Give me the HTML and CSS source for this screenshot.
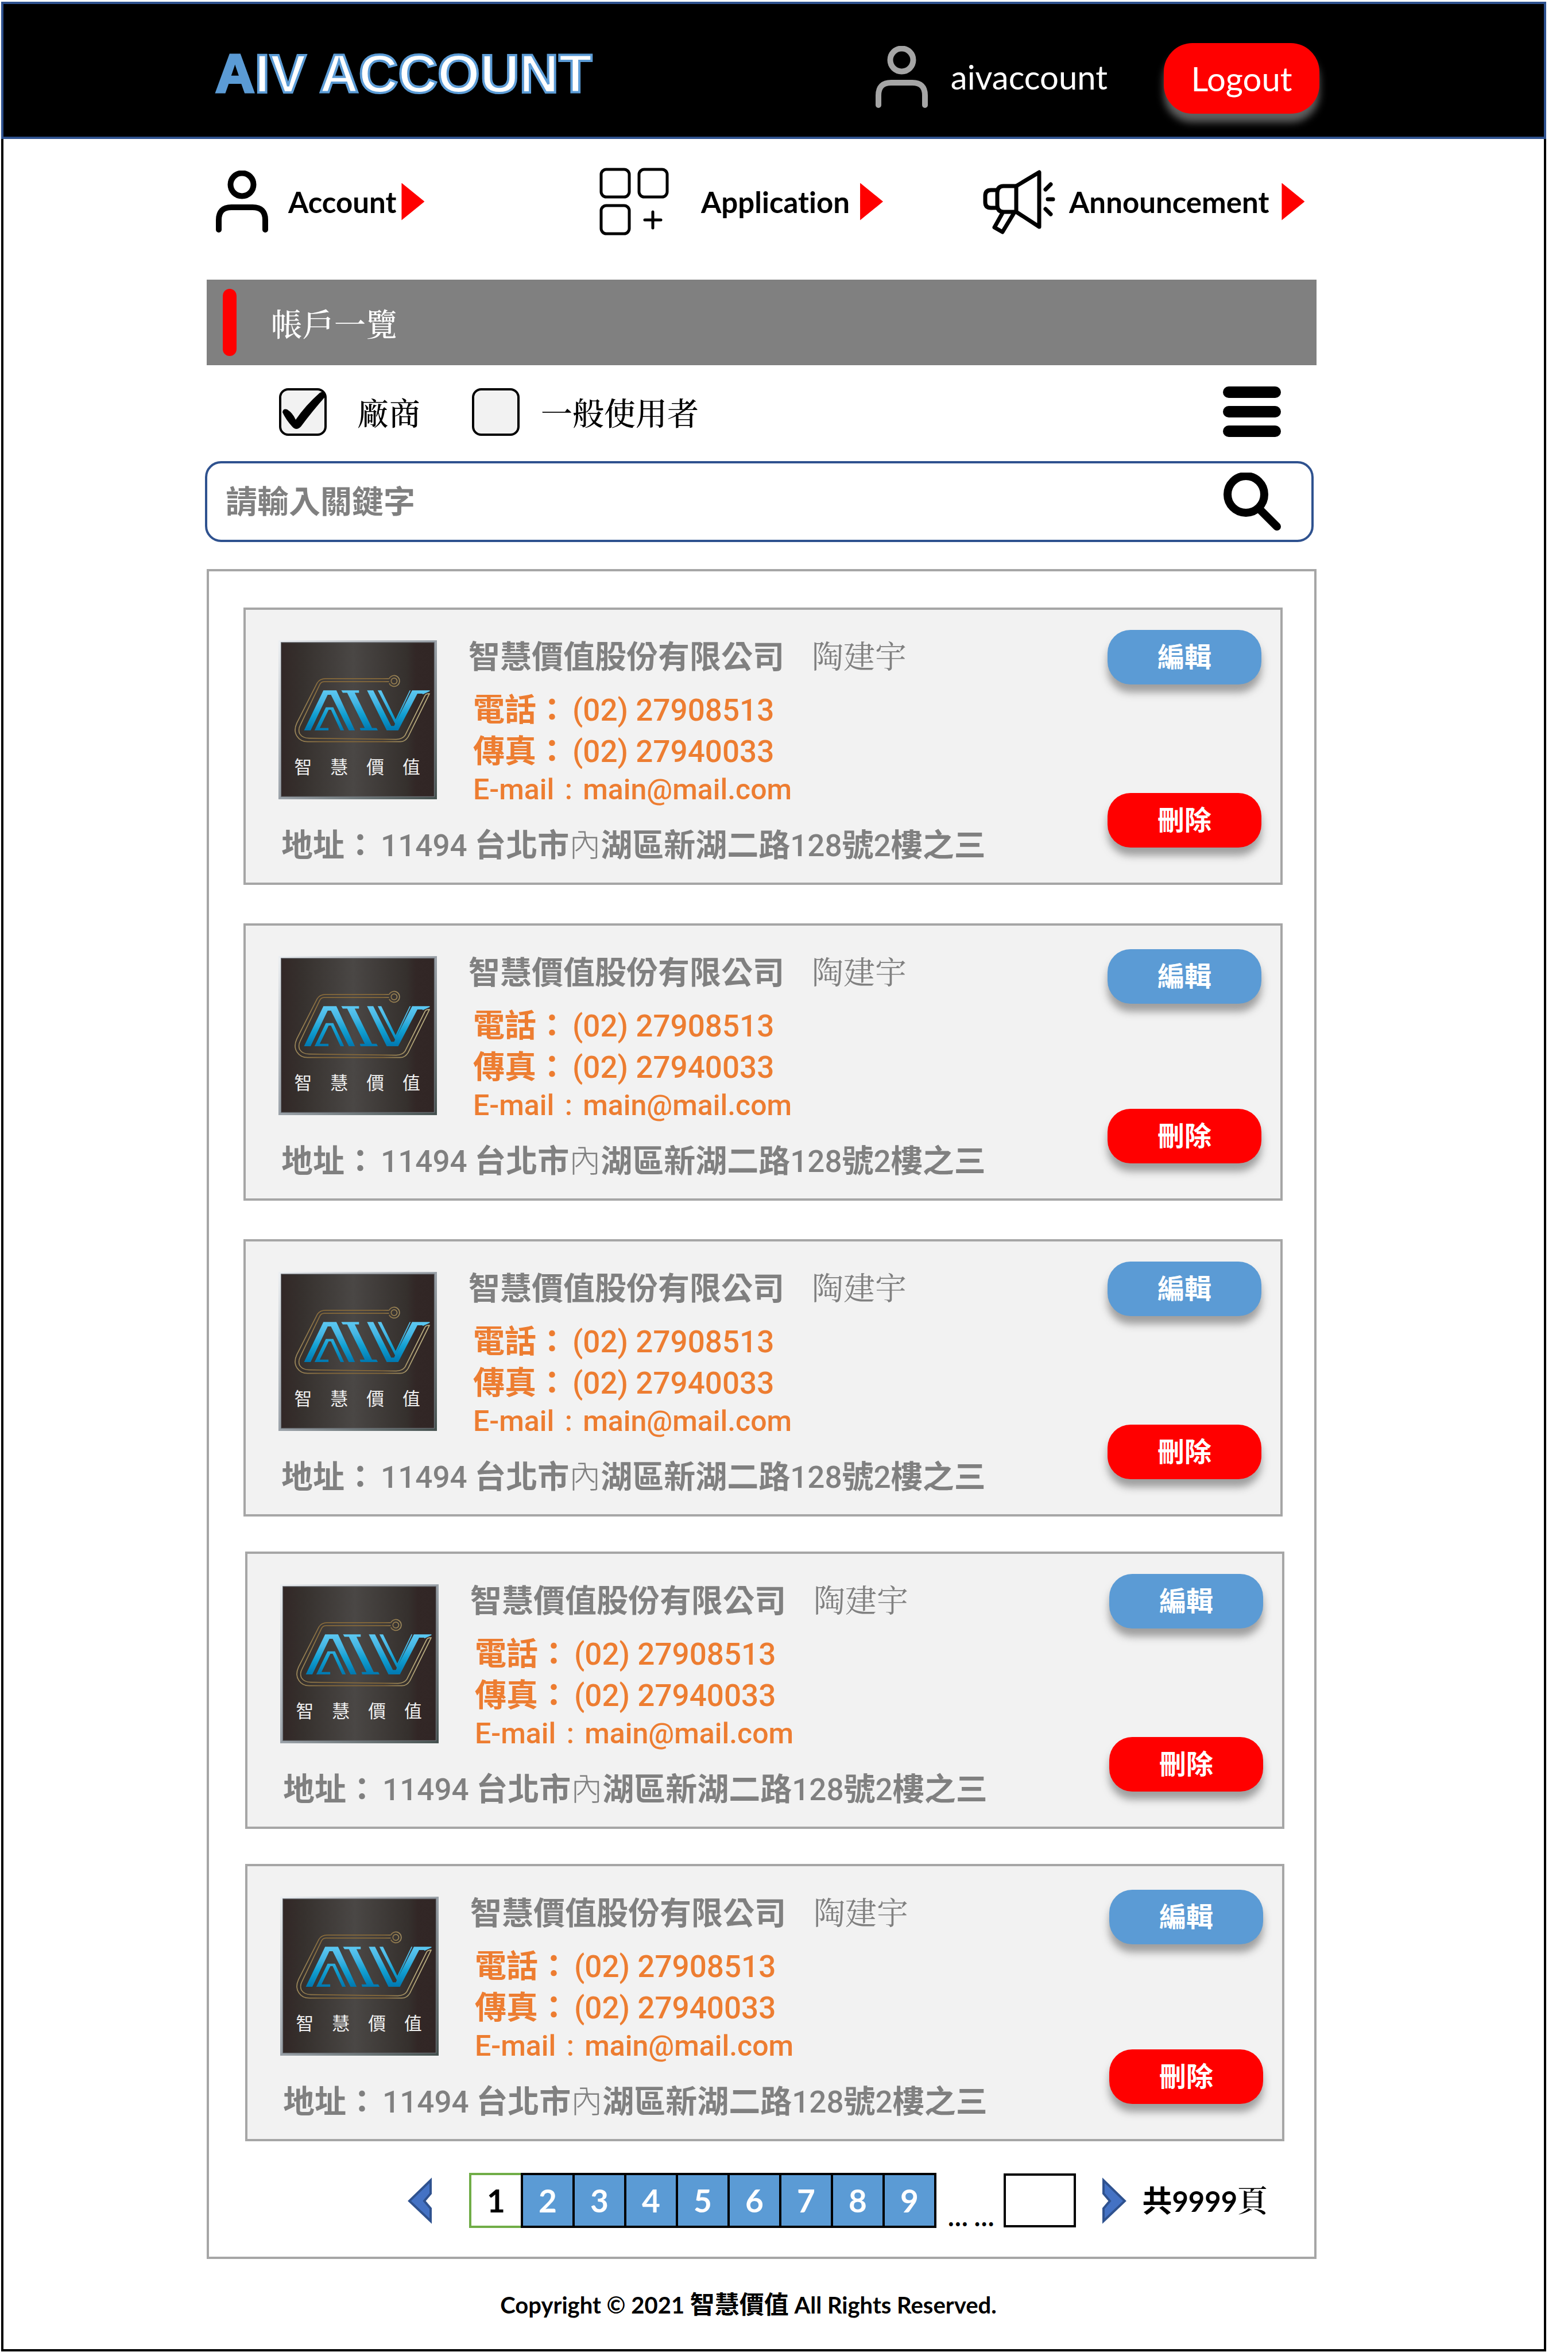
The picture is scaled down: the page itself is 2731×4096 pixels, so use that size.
FILE: index.html
```
<!DOCTYPE html>
<html lang="zh-Hant">
<head>
<meta charset="utf-8">
<meta name="viewport" content="width=device-width, initial-scale=1">
<title>AIV Account</title>
<link rel="stylesheet" href="styles.css">
</head>
<body>
<svg class="defs" aria-hidden="true">
  <defs>
    <linearGradient id="logo-frame" x1="0" y1="0" x2="1" y2="1">
      <stop offset="0" stop-color="#eceff2"/><stop offset=".5" stop-color="#9aa1a8"/><stop offset="1" stop-color="#434f4d"/>
    </linearGradient>
    <linearGradient id="logo-panel" x1="0" y1="0" x2="1" y2="0">
      <stop offset="0" stop-color="#322726"/><stop offset=".14" stop-color="#36312e"/><stop offset=".47" stop-color="#4a4745"/><stop offset=".82" stop-color="#35302d"/><stop offset=".88" stop-color="#322726"/><stop offset="1" stop-color="#312625"/>
    </linearGradient>
    <linearGradient id="logo-blue" gradientUnits="userSpaceOnUse" x1="0" y1="305" x2="0" y2="549">
      <stop offset="0" stop-color="#5cc8f2"/><stop offset=".3" stop-color="#46b6e4"/><stop offset=".6" stop-color="#12a0d2"/><stop offset="1" stop-color="#0078b0"/>
    </linearGradient>
    <linearGradient id="logo-gold" gradientUnits="userSpaceOnUse" x1="100" y1="0" x2="920" y2="0">
      <stop offset="0" stop-color="#a8976a"/><stop offset=".3" stop-color="#86693a"/><stop offset=".75" stop-color="#86693a"/><stop offset="1" stop-color="#b9ad80"/>
    </linearGradient>
  </defs>
  <symbol id="logo" viewBox="0 0 966 969">
    <rect width="966" height="969" fill="url(#logo-frame)"/>
    <rect x="16" y="13" width="934" height="940" fill="url(#logo-panel)" stroke="#6c7076" stroke-width="4"/>
    <g transform="translate(-78 -66)" fill="none" stroke="url(#logo-gold)" stroke-width="6">
      <path d="M752 300H365Q330 300 314 326L190 570Q168 618 192 652Q213 684 255 684H820Q850 684 868 655L998 392Q976 391 970 405L850 645Q835 668 795 670L265 663Q225 663 207 635Q197 610 210 585L330 335Q338 318 358 318H752"/>
      <path d="M753 300A33 33 0 1 1 753 328"/>
      <circle cx="783" cy="314" r="18"/>
    </g>
    <g fill="url(#logo-blue)">
      <path d="M156 549L274 305H353L466 549H429L320 332H300L196 549Z"/>
      <path d="M220 549L289 408H334L400 549H378L320 423H306L252 534H305V549Z"/>
      <path d="M383 305H491V320H465L570 534H598L606 549H500L496 534H526L419 320H392Z"/>
      <path d="M540 305H578L687 522H705L711 509L605 305H627L714 482L800 305H806L718 494L815 305H922V310L880 330L877 325H847L730 549H660Z"/>
    </g>
    <text class="logo-name" x="96 316 536 756" y="813">智慧價值</text>
  </symbol>
  <symbol id="user" viewBox="0 0 91 108">
    <circle cx="45.500" cy="24.500" r="20"/>
    <path d="M5 103V86Q5 64 27 64H64Q86 64 86 86V103"/>
  </symbol>
</svg>

<div class="page">
  <header class="topbar">
    <h1 class="brand"><span class="brand-initial">A</span>IV ACCOUNT</h1>
    <div class="session">
      <svg class="icon-user" aria-hidden="true"><use href="#user"/></svg>
      <span>aivaccount</span>
    </div>
    <button class="logout" type="button">Logout</button>
  </header>

  <nav class="menu">
    <a class="menu-link menu-link--account" href="#account">
      <svg class="icon-user" aria-hidden="true"><use href="#user"/></svg>
      <span>Account</span><i class="arrow"></i>
    </a>
    <a class="menu-link menu-link--application" href="#application">
      <svg class="icon-apps" viewBox="0 0 121 118" aria-hidden="true">
        <rect x="3" y="3" width="49" height="48" rx="9"/><rect x="69" y="3" width="49" height="48" rx="9"/><rect x="3" y="66" width="49" height="49" rx="9"/>
        <path d="M79 91H107M93 77V105"/>
      </svg>
      <span>Application</span><i class="arrow"></i>
    </a>
    <a class="menu-link menu-link--announcement" href="#announcement">
      <svg class="icon-horn" viewBox="0 0 127 115" aria-hidden="true">
        <path d="M58 30L98 6V101L58 75Z"/>
        <path d="M58 30H36Q25 30 25 42V63Q25 75 36 75H58"/>
        <path d="M25 37H14Q4 37 4 47V58Q4 68 14 68H25"/>
        <path d="M34 77L20 102L34 110L54 77"/>
        <path d="M109 36L118 27M113 53H122M109 70L118 79"/>
      </svg>
      <span>Announcement</span><i class="arrow"></i>
    </a>
  </nav>

  <main class="content">
    <h2 class="section-title">帳戶一覽</h2>

    <div class="filters">
      <div class="filter">
        <span class="tickbox"><input id="filter-vendor" type="checkbox" checked><svg viewBox="0 0 83 83" aria-hidden="true"><path d="M6 42Q7 35 14 37Q24 43 29 55Q46 30 71 8Q80 3 82 13Q58 40 38 67Q30 75 23 67Q12 55 6 42Z"/></svg></span>
        <label for="filter-vendor">廠商</label>
      </div>
      <div class="filter filter--user">
        <span class="tickbox"><input id="filter-user" type="checkbox"><svg viewBox="0 0 83 83" aria-hidden="true"><path d="M6 42Q7 35 14 37Q24 43 29 55Q46 30 71 8Q80 3 82 13Q58 40 38 67Q30 75 23 67Q12 55 6 42Z"/></svg></span>
        <label for="filter-user">一般使用者</label>
      </div>
      <button class="list-toggle" type="button" aria-label="選單"><i></i><i></i><i></i></button>
    </div>

    <form class="search">
      <input class="search-input" type="text" placeholder="請輸入關鍵字" aria-label="請輸入關鍵字">
      <button class="search-button" type="button" aria-label="搜尋">
        <svg viewBox="0 0 101 102" aria-hidden="true"><circle cx="39" cy="38" r="32"/><path d="M62 63L93 94"/></svg>
      </button>
    </form>

    <section class="list">
      <div class="card-group">
        <article class="card">
          <svg class="logo" role="img"><use href="#logo"/></svg>
          <div class="info">
            <p class="company">智慧價值股份有限公司<span class="person">陶建宇</span></p>
            <p class="contact">電話：<span class="latin">(02) 27908513</span></p>
            <p class="contact">傳真：<span class="latin">(02) 27940033</span></p>
            <p class="contact contact--mail">E-mail <span class="colon">:</span> main@mail.com</p>
          </div>
          <p class="address">地址：<span class="latin">11494</span> 台北市<span class="thin">內</span>湖區新湖二路<span class="digits">128</span>號<span class="digits">2</span>樓之三</p>
          <div class="actions">
            <button class="button button--edit" type="button">編輯</button>
            <button class="button button--delete" type="button">刪除</button>
          </div>
        </article>
        <article class="card card--low">
          <svg class="logo" role="img"><use href="#logo"/></svg>
          <div class="info">
            <p class="company">智慧價值股份有限公司<span class="person">陶建宇</span></p>
            <p class="contact">電話：<span class="latin">(02) 27908513</span></p>
            <p class="contact">傳真：<span class="latin">(02) 27940033</span></p>
            <p class="contact contact--mail">E-mail <span class="colon">:</span> main@mail.com</p>
          </div>
          <p class="address">地址：<span class="latin">11494</span> 台北市<span class="thin">內</span>湖區新湖二路<span class="digits">128</span>號<span class="digits">2</span>樓之三</p>
          <div class="actions">
            <button class="button button--edit" type="button">編輯</button>
            <button class="button button--delete" type="button">刪除</button>
          </div>
        </article>
        <article class="card">
          <svg class="logo" role="img"><use href="#logo"/></svg>
          <div class="info">
            <p class="company">智慧價值股份有限公司<span class="person">陶建宇</span></p>
            <p class="contact">電話：<span class="latin">(02) 27908513</span></p>
            <p class="contact">傳真：<span class="latin">(02) 27940033</span></p>
            <p class="contact contact--mail">E-mail <span class="colon">:</span> main@mail.com</p>
          </div>
          <p class="address">地址：<span class="latin">11494</span> 台北市<span class="thin">內</span>湖區新湖二路<span class="digits">128</span>號<span class="digits">2</span>樓之三</p>
          <div class="actions">
            <button class="button button--edit" type="button">編輯</button>
            <button class="button button--delete" type="button">刪除</button>
          </div>
        </article>
      </div>
      <div class="card-group card-group--second">
        <article class="card">
          <svg class="logo" role="img"><use href="#logo"/></svg>
          <div class="info">
            <p class="company">智慧價值股份有限公司<span class="person">陶建宇</span></p>
            <p class="contact">電話：<span class="latin">(02) 27908513</span></p>
            <p class="contact">傳真：<span class="latin">(02) 27940033</span></p>
            <p class="contact contact--mail">E-mail <span class="colon">:</span> main@mail.com</p>
          </div>
          <p class="address">地址：<span class="latin">11494</span> 台北市<span class="thin">內</span>湖區新湖二路<span class="digits">128</span>號<span class="digits">2</span>樓之三</p>
          <div class="actions">
            <button class="button button--edit" type="button">編輯</button>
            <button class="button button--delete" type="button">刪除</button>
          </div>
        </article>
        <article class="card card--low">
          <svg class="logo" role="img"><use href="#logo"/></svg>
          <div class="info">
            <p class="company">智慧價值股份有限公司<span class="person">陶建宇</span></p>
            <p class="contact">電話：<span class="latin">(02) 27908513</span></p>
            <p class="contact">傳真：<span class="latin">(02) 27940033</span></p>
            <p class="contact contact--mail">E-mail <span class="colon">:</span> main@mail.com</p>
          </div>
          <p class="address">地址：<span class="latin">11494</span> 台北市<span class="thin">內</span>湖區新湖二路<span class="digits">128</span>號<span class="digits">2</span>樓之三</p>
          <div class="actions">
            <button class="button button--edit" type="button">編輯</button>
            <button class="button button--delete" type="button">刪除</button>
          </div>
        </article>
      </div>

      <nav class="pager" aria-label="分頁">
        <button class="step" type="button" aria-label="上一頁"><svg viewBox="0 0 44 86" aria-hidden="true"><path d="M41 8L4 44L41 79V57L30 44L41 31Z"/></svg></button>
        <div class="pages">
          <button class="page-number page-number--current" type="button" aria-current="page">1</button>
          <button class="page-number" type="button">2</button>
          <button class="page-number" type="button">3</button>
          <button class="page-number" type="button">4</button>
          <button class="page-number" type="button">5</button>
          <button class="page-number" type="button">6</button>
          <button class="page-number" type="button">7</button>
          <button class="page-number" type="button">8</button>
          <button class="page-number" type="button">9</button>
        </div>
        <span class="ellipsis">… …</span>
        <input class="page-input" type="text" aria-label="頁碼">
        <button class="step step--next" type="button" aria-label="下一頁"><svg viewBox="0 0 44 86" aria-hidden="true"><path d="M3 8L40 44L3 79V57L14 44L3 31Z"/></svg></button>
        <span class="total"><span class="total-cjk">共</span>9999<span class="total-serif">頁</span></span>
      </nav>
    </section>
  </main>

  <footer class="footer">Copyright © 2021 <span class="footer-cjk">智慧價值</span> All Rights Reserved.</footer>
</div>
</body>
</html>
```
FILE: styles.css
```
:root {
  --blue: #5b9bd5;
  --navy: #2f528f;
  --grey: #808080;
  --line: #a6a6a6;
  --orange: #ed7d31;
  --red: #ff0000;
  --latin: Lato, "Noto Sans CJK TC", sans-serif;
  --cjk: "Noto Sans CJK TC", sans-serif;
  --ming: "Noto Serif CJK TC", "Noto Sans CJK TC", serif;
}

* { box-sizing: border-box; }

body {
  margin: 0;
  background: #fff;
  color: #000;
  font-family: var(--latin);
  font-variant-ligatures: none;
}

h1, h2, p { margin: 0; }

button {
  padding: 0;
  border: 0;
  background: none;
  color: inherit;
  font: inherit;
}

svg { display: block; }

.defs { position: absolute; width: 0; height: 0; }

.page {
  display: flex;
  flex-direction: column;
  min-height: calc(100vh - 4px);
  margin: 3px 38px 1px 2px;
  border: 4px solid #000;
}

/* top bar */

.topbar {
  display: flex;
  align-items: center;
  margin: -4px -4px 0;
  padding: 68px 391px 40px 369px;
  border: 4px solid var(--navy);
  background: #000;
  color: #fff;
}

.brand {
  padding-bottom: 16px;
  font: 700 95px/107px "Liberation Sans", sans-serif;
  -webkit-text-stroke: 4px var(--blue);
}

.brand-initial { color: var(--blue); }

.session {
  display: flex;
  align-items: center;
  gap: 40px;
  margin-left: auto;
  margin-right: 98px;
  padding-bottom: 6px;
  font-size: 58px;
  line-height: 70px;
}

.icon-user {
  width: 91px;
  height: 108px;
  fill: none;
  stroke: currentColor;
  stroke-width: 10px;
  stroke-linecap: round;
}

.session .icon-user { color: #a5a5a5; }

.logout {
  width: 271px;
  height: 123px;
  border-radius: 50px;
  background: var(--red);
  box-shadow: 0 15px 14px rgba(129, 129, 129, .74);
  font-size: 58px;
  line-height: 70px;
}

/* main menu */

.menu {
  display: grid;
  grid-template-columns: repeat(3, 1fr);
  padding: 50px 309px 0 370px;
}

.menu-link {
  display: flex;
  align-items: center;
  height: 118px;
  color: #000;
  font-size: 51px;
  font-weight: 700;
  text-decoration: none;
}

.menu-link--account { gap: 35px; }
.menu-link--application { gap: 56px; }
.menu-link--announcement { gap: 23px; }

.arrow {
  width: 40px;
  height: 65px;
  background: var(--red);
  clip-path: polygon(0 0, 100% 50%, 0 100%);
}

.menu-link--account .arrow { margin-left: -26px; }
.menu-link--application .arrow { margin-left: -38px; }
.menu-link--announcement .arrow { margin-left: -1px; }

.icon-apps, .icon-horn {
  fill: none;
  stroke: #000;
  stroke-linecap: round;
  stroke-linejoin: round;
}

.icon-apps { width: 121px; height: 118px; stroke-width: 5px; }
.icon-horn { width: 127px; height: 115px; stroke-width: 7px; }

/* content */

.content { padding: 77px 396px 0 354px; }

.section-title {
  display: flex;
  align-items: center;
  gap: 60px;
  padding: 16px 28px;
  background: var(--grey);
  color: #fff;
  font: 500 55px/80px var(--ming);
}

.section-title::before {
  content: "";
  width: 24px;
  height: 117px;
  border-radius: 12px;
  background: var(--red);
}

.filters {
  display: flex;
  align-items: center;
  gap: 90px;
  height: 86px;
  margin-top: 38px;
  padding: 0 62px 0 126px;
  font: 500 55px/80px var(--ming);
}

.filter {
  display: flex;
  align-items: center;
  gap: 53px;
}

.filter--user { gap: 37px; }

.tickbox {
  position: relative;
  flex: none;
  width: 83px;
  height: 83px;
}

.tickbox input {
  display: block;
  width: 83px;
  height: 83px;
  margin: 0;
  border: 4px solid #000;
  border-radius: 16px;
  background: #f2f2f2;
  appearance: none;
}

.tickbox svg {
  position: absolute;
  inset: 0;
  visibility: hidden;
}

.tickbox input:checked + svg { visibility: visible; }

.list-toggle {
  display: flex;
  flex-direction: column;
  gap: 14px;
  width: 101px;
  margin-left: auto;
}

.list-toggle i {
  height: 20px;
  border-radius: 10px;
  background: #000;
}

.search {
  display: flex;
  align-items: center;
  height: 141px;
  margin: 43px 5px 0 -3px;
  padding: 0 52px 0 32px;
  border: 4px solid var(--navy);
  border-radius: 28px;
}

.search-input {
  flex: 1;
  min-width: 0;
  height: 100px;
  padding: 0 0 10px;
  border: 0;
  background: none;
  color: #000;
  font: 700 55px/80px var(--cjk);
  outline: 0;
}

.search-input::placeholder { color: var(--grey); opacity: 1; }

.search-button svg {
  width: 101px;
  height: 102px;
  fill: none;
  stroke: #000;
  stroke-width: 14px;
  stroke-linecap: round;
}

/* account cards */

.list {
  margin-top: 47px;
  padding: 63px 55px 50px 60px;
  border: 4px solid var(--line);
}

.card-group {
  display: flex;
  flex-direction: column;
  gap: 67px;
}

.card-group--second {
  gap: 61px;
  margin: 61px -3px 0 3px;
}

.card {
  display: grid;
  grid-template-columns: 276px 1fr 268px;
  grid-template-rows: auto 1fr;
  column-gap: 55px;
  height: 483px;
  padding: 0 33px 0 57px;
  border: 4px solid var(--line);
  background: #f2f2f2;
}

.logo {
  width: 276px;
  height: 277px;
  margin-top: 53px;
}

.logo-name {
  fill: #f0f0f0;
  font: 400 108px var(--cjk);
}

.info { padding-top: 41px; }

.company, .contact, .address {
  color: var(--grey);
  font: 700 55px/72px var(--cjk);
  white-space: nowrap;
}

.company {
  height: 72px;
  margin-bottom: 20px;
}

.person {
  margin-left: 48px;
  font: 400 55px/1 var(--ming);
}

.contact {
  padding-left: 8px;
  color: var(--orange);
}

.latin, .digits {
  font-family: Roboto, sans-serif;
  font-size: 53px;
  font-weight: 500;
  line-height: 1;
}

.latin { margin-left: 8px; }

.contact--mail {
  font-family: Roboto, sans-serif;
  font-size: 50px;
  font-weight: 500;
}

.colon { margin: 0 6px; }

.address {
  grid-column: 1 / 3;
  margin-top: 20px;
  padding-left: 5px;
}

.thin { font-weight: 300; }

.actions {
  grid-column: 3;
  grid-row: 1 / 3;
  display: flex;
  flex-direction: column;
  justify-content: space-between;
  padding: 35px 0 61px;
}

.card--low .actions { padding-top: 41px; }

.button {
  height: 95px;
  padding-bottom: 8px;
  border-radius: 40px;
  box-shadow: 0 14px 14px rgba(129, 129, 129, .74);
  color: #fff;
  font: 700 47px/68px var(--cjk);
}

.button--edit { background: var(--blue); }
.button--delete { background: var(--red); }

/* pagination */

.pager {
  display: flex;
  align-items: center;
  margin-top: 55px;
  padding-left: 285px;
}

.step svg {
  width: 44px;
  height: 86px;
  fill: #4472c4;
  stroke: var(--navy);
  stroke-width: 4px;
}

.step--next { margin-left: 45px; }

.pages {
  display: flex;
  margin-left: 64px;
}

.page-number {
  width: 94px;
  height: 96px;
  margin-right: -4px;
  border: 4px solid #000;
  background: var(--blue);
  color: #fff;
  font-size: 55px;
  font-weight: 700;
}

.page-number:last-child { margin-right: 0; }

.page-number--current {
  border-color: #70ad47;
  background: #fff;
  color: #000;
}

.ellipsis {
  align-self: flex-end;
  margin-left: 20px;
  font-size: 45px;
  font-weight: 700;
  line-height: 40px;
}

.page-input {
  width: 126px;
  height: 94px;
  margin-left: 17px;
  border: 4px solid #000;
  background: #fff;
  font: 700 48px var(--latin);
  text-align: center;
}

.total {
  margin-left: 26px;
  font-size: 49px;
  font-weight: 700;
  line-height: 72px;
}

.total-cjk { font-size: 52px; }
.total-serif { font: 600 53px/1 var(--ming); }

.footer {
  padding: 49px 88px 0 0;
  font-size: 40px;
  font-weight: 700;
  line-height: 60px;
  text-align: center;
}

.footer-cjk { font-size: 43px; }
```
